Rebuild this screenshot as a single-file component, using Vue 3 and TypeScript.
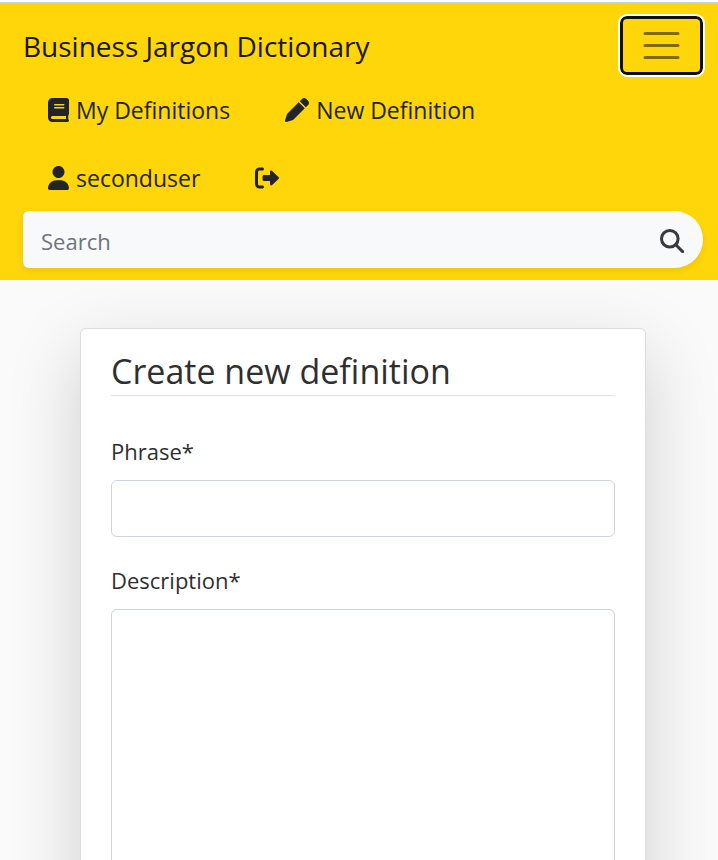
<script setup lang="ts">
import { ref } from 'vue'

interface NavItem {
  text: string
  label: string
  viewBox: string
  width: string
  path: string
}

const navRows: NavItem[][] = [
  [
    {
      text: 'My Definitions',
      label: 'My Definitions',
      viewBox: '0 0 448 512',
      width: '21',
      path: 'M448 336v-288C448 21.49 426.5 0 400 0H96C42.98 0 0 42.98 0 96v320c0 53.02 42.98 96 96 96h320c17.67 0 32-14.33 32-31.1c0-11.72-6.607-21.52-16-27.1v-81.36C441.8 362.8 448 350.2 448 336zM143.1 128h192C344.8 128 352 135.2 352 144C352 152.8 344.8 160 336 160H143.1C135.2 160 128 152.8 128 144C128 135.2 135.2 128 143.1 128zM143.1 192h192C344.8 192 352 199.2 352 208C352 216.8 344.8 224 336 224H143.1C135.2 224 128 216.8 128 208C128 199.2 135.2 192 143.1 192zM384 448H96c-17.67 0-32-14.33-32-32c0-17.67 14.33-32 32-32h288V448z',
    },
    {
      text: 'New Definition',
      label: 'New Definition',
      viewBox: '0 0 512 512',
      width: '24',
      path: 'M362.7 19.32C387.7-5.678 428.3-5.678 453.3 19.32L492.7 58.75C517.7 83.74 517.7 124.3 492.7 149.3L444.3 197.7L314.3 67.72L362.7 19.32zM421.7 220.3L188.5 453.4C178.1 463.8 165.2 471.5 151.1 475.6L30.77 511C22.35 513.5 13.24 511.2 7.03 504.1C.8198 498.8-1.502 489.7 .976 481.2L36.37 360.9C40.53 346.8 48.16 333.9 58.57 323.5L291.7 90.34L421.7 220.3z',
    },
  ],
  [
    {
      text: 'seconduser',
      label: 'seconduser',
      viewBox: '0 0 448 512',
      width: '21',
      path: 'M224 256c70.7 0 128-57.31 128-128s-57.3-128-128-128C153.3 0 96 57.31 96 128S153.3 256 224 256zM274.7 304H173.3C77.61 304 0 381.6 0 477.3c0 19.14 15.52 34.67 34.66 34.67h378.7C432.5 512 448 496.5 448 477.3C448 381.6 370.4 304 274.7 304z',
    },
    {
      text: '',
      label: 'Log out',
      viewBox: '0 0 512 512',
      width: '24',
      path: 'M96 480h64C177.7 480 192 465.7 192 448S177.7 416 160 416H96c-17.67 0-32-14.33-32-32V128c0-17.67 14.33-32 32-32h64C177.7 96 192 81.67 192 64S177.7 32 160 32H96C42.98 32 0 74.98 0 128v256C0 437 42.98 480 96 480zM504.8 238.5l-144.1-136c-6.975-6.578-17.2-8.375-26-4.594c-8.803 3.797-14.51 12.47-14.51 22.05l-.0918 72l-128-.001c-17.69 0-32.02 14.33-32.02 32v64c0 17.67 14.34 32 32.02 32l128 .001l.0918 71.1c0 9.578 5.707 18.25 14.51 22.05c8.803 3.781 19.03 1.984 26-4.594l144.1-136C514.4 264.4 514.4 247.6 504.8 238.5z',
    },
  ],
]

const menuOpen = ref(true)
const query = ref('')
const phrase = ref('')
const description = ref('')
</script>

<template>
  <div class="page">
    <header class="navbar">
      <div class="bar">
        <a class="brand" href="#">Business Jargon Dictionary</a>
        <button
          class="toggler"
          type="button"
          aria-label="Toggle navigation"
          :aria-expanded="menuOpen"
          @click="menuOpen = !menuOpen"
        >
          <svg viewBox="0 0 30 30" width="45" height="45" aria-hidden="true">
            <path d="M4 7h22M4 15h22M4 23h22" />
          </svg>
        </button>
      </div>
      <div v-show="menuOpen">
        <nav>
          <div v-for="(row, i) in navRows" :key="i" class="nav-row">
            <a v-for="item in row" :key="item.label" class="nav-link" href="#" :aria-label="item.label">
              <svg :viewBox="item.viewBox" :width="item.width" height="24" aria-hidden="true">
                <path :d="item.path" />
              </svg>
              <span v-if="item.text">{{ item.text }}</span>
            </a>
          </div>
        </nav>
        <form class="search" role="search" @submit.prevent>
          <input v-model="query" type="search" placeholder="Search" aria-label="Search" />
          <button type="submit" aria-label="Submit search">
            <svg viewBox="0 0 24 24" width="24" height="24" aria-hidden="true">
              <circle cx="9.8" cy="9.8" r="8.3" />
              <path d="M15.8 15.8L22.6 22.6" />
            </svg>
          </button>
        </form>
      </div>
    </header>

    <main class="content">
      <form class="card" @submit.prevent>
        <h1>Create new definition</h1>
        <label for="phrase">Phrase*</label>
        <input id="phrase" v-model="phrase" class="field" type="text" required />
        <label for="description">Description*</label>
        <textarea id="description" v-model="description" class="field" rows="10" required></textarea>
      </form>
    </main>
  </div>
</template>

<style>
body {
  background: #fafafa;
}
</style>

<style scoped>
.page,
.page * {
  box-sizing: border-box;
}

.page {
  font-family: 'Segoe UI', 'Open Sans', 'Noto Sans', sans-serif;
  font-size: 22px;
  line-height: 36px;
  color: #212529;
  border-top: 2px solid #fff;
}

.navbar {
  background: #ffd60a;
  border-top: 1px solid #ccd2d8;
  padding: 13px 15px 12px 23px;
}

.bar {
  display: flex;
  align-items: center;
  justify-content: space-between;
}

.brand {
  color: #1a1608;
  font-size: 28px;
  text-decoration: none;
}

.toggler {
  display: flex;
  align-items: center;
  justify-content: center;
  width: 83px;
  height: 59px;
  padding: 0;
  background: none;
  border: 3px solid #101010;
  border-radius: 7px;
  outline: 2px solid #fff;
}

.toggler path {
  fill: none;
  stroke: rgba(0, 0, 0, 0.5);
  stroke-width: 2;
  stroke-linecap: round;
}

.nav-row {
  display: flex;
  gap: 55px;
  height: 68px;
  padding: 2px 0 0 25px;
  align-items: center;
}

.nav-link {
  display: flex;
  align-items: center;
  gap: 7px;
  color: #212529;
  font-size: 23px;
  text-decoration: none;
}

.nav-link svg {
  fill: currentColor;
}

.search {
  display: flex;
  height: 57px;
  background: #f8f9fb;
  border-radius: 6px 29px 29px 6px;
  box-shadow: 0 3px 6px rgba(0, 0, 0, 0.08);
}

.search input {
  flex: 1;
  min-width: 0;
  padding: 3px 18px 0;
  font: inherit;
  color: inherit;
  background: none;
  border: 0;
  outline: 0;
  appearance: none;
}

.search input::placeholder {
  color: #6c757d;
  opacity: 1;
}

.search button {
  display: flex;
  align-items: center;
  padding: 2px 19px 0 18px;
  background: none;
  border: 0;
}

.search svg {
  fill: none;
  stroke: #343a40;
  stroke-width: 3;
  stroke-linecap: round;
}

.content {
  padding: 48px 72px 48px 80px;
}

.card {
  display: flex;
  flex-direction: column;
  padding: 20px 30px 30px;
  color: #2f2f2f;
  background: #fff;
  border: 1px solid #dcdcdc;
  border-radius: 6px;
  box-shadow: 0 24px 72px rgba(0, 0, 0, 0.175);
}

h1 {
  margin: 0 0 37px;
  padding-bottom: 2px;
  border-bottom: 1px solid #dee2e6;
  font-size: 34px;
  font-weight: 400;
  line-height: 44px;
}

label {
  margin-bottom: 11px;
}

.field {
  width: 100%;
  margin-bottom: 25px;
  padding: 8px 18px;
  font: inherit;
  color: inherit;
  background: #fff;
  border: 1px solid #ced4da;
  border-radius: 6px;
}

input.field {
  height: 57px;
}

textarea.field {
  margin-bottom: 0;
}
</style>
